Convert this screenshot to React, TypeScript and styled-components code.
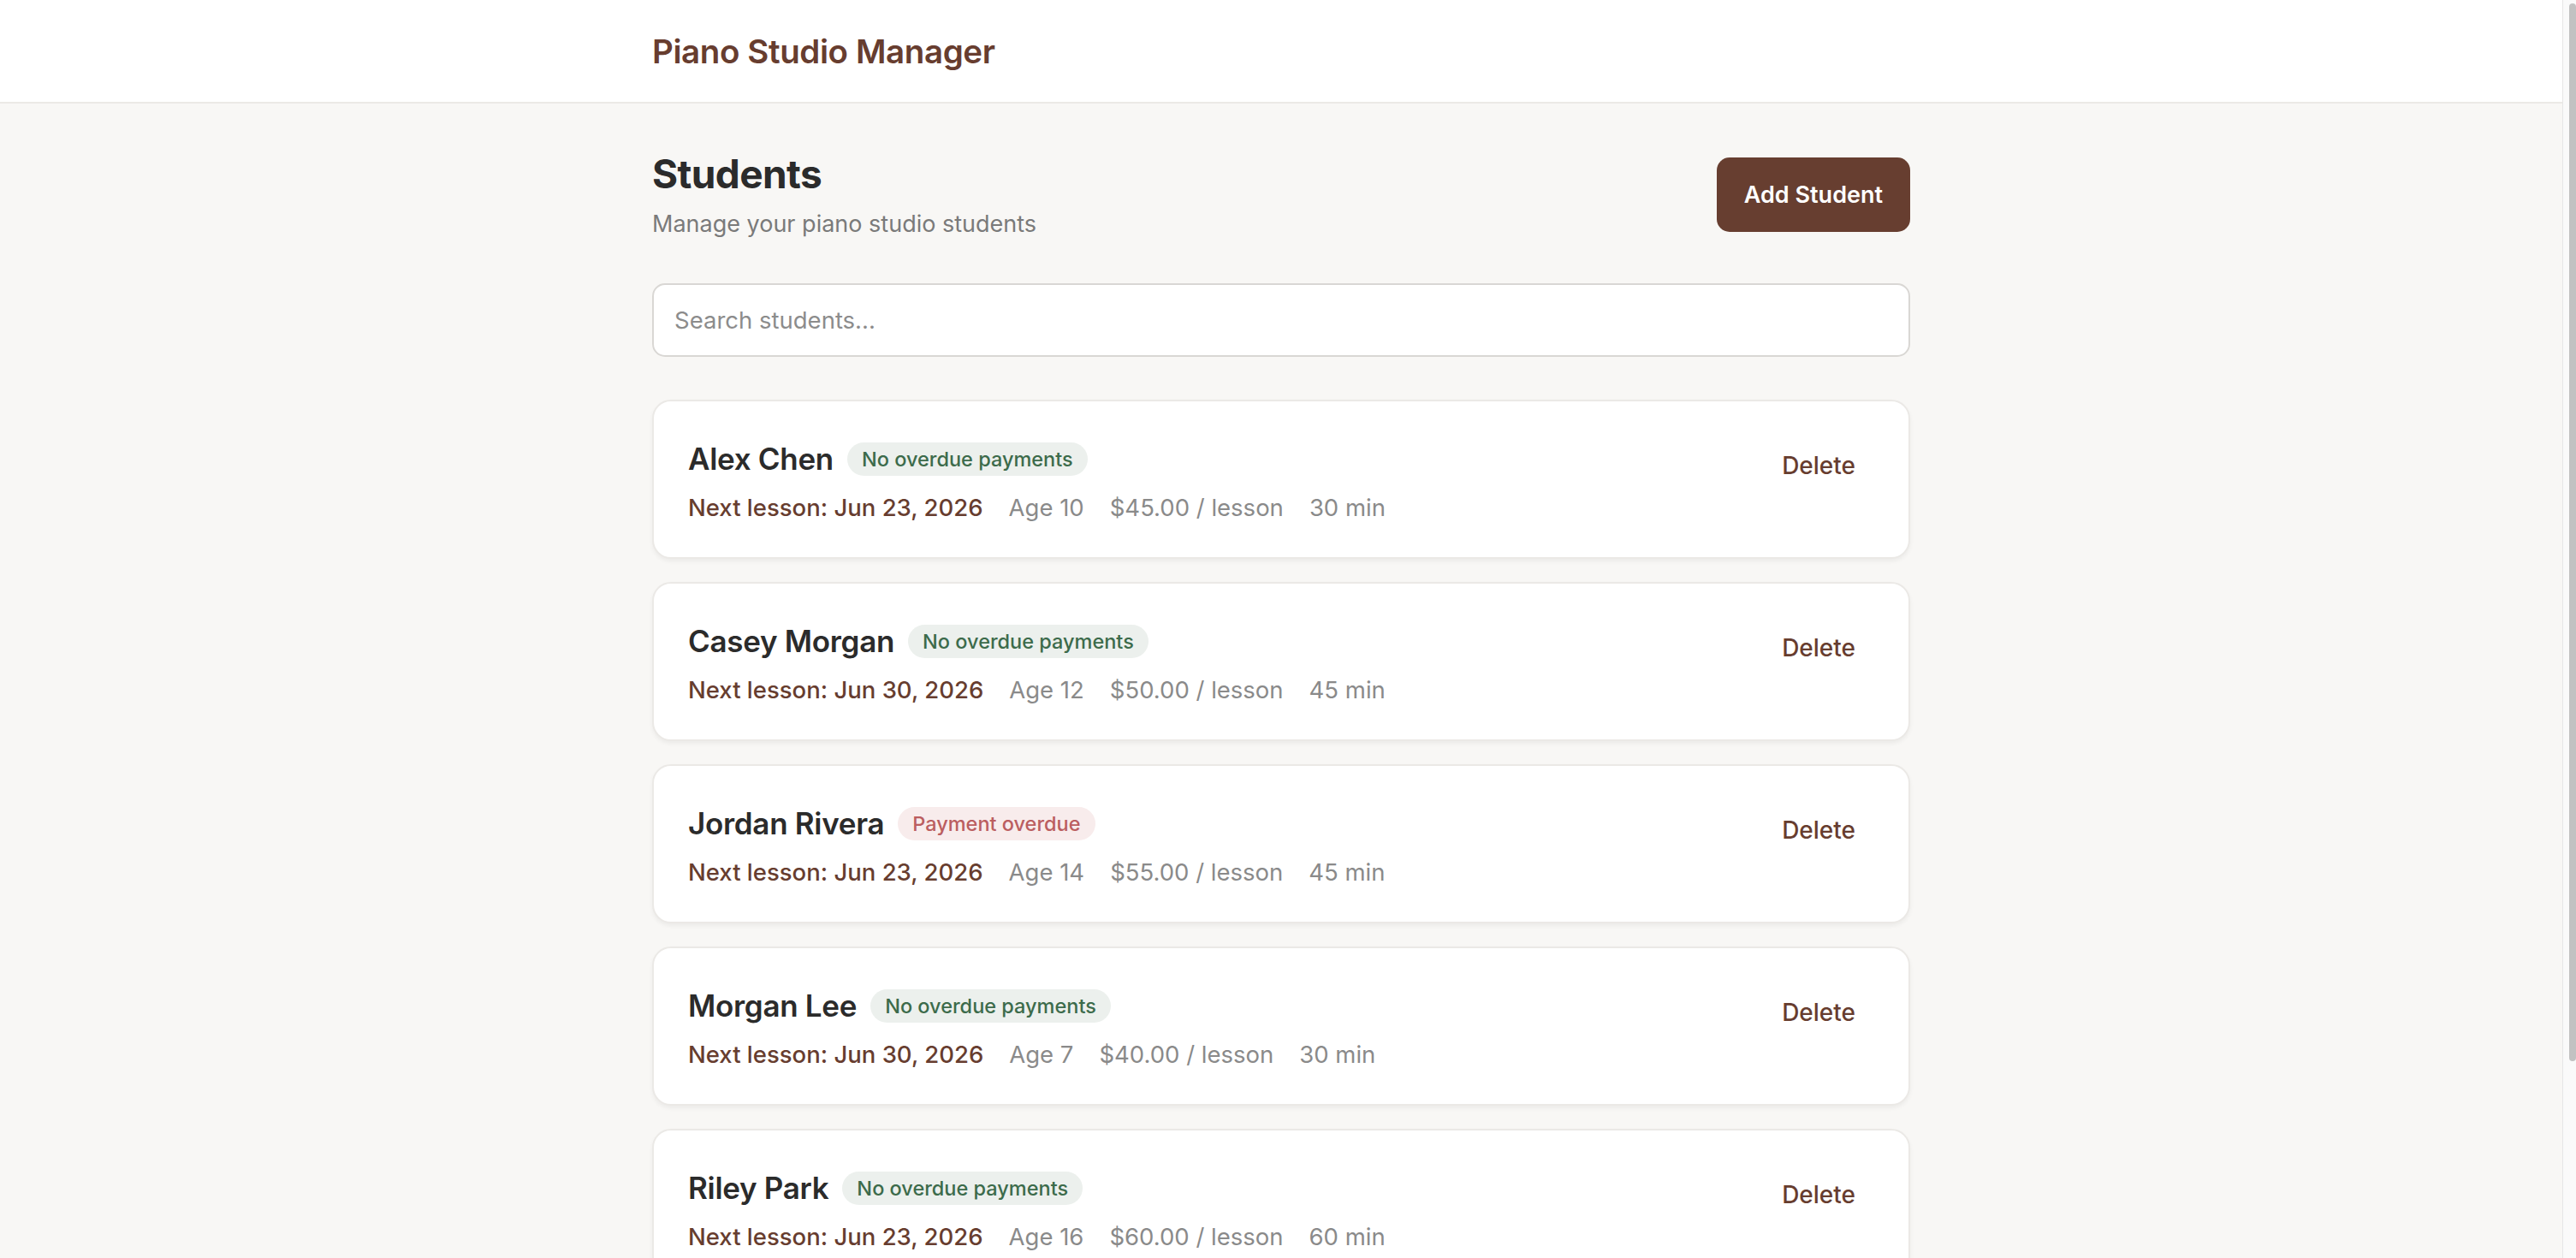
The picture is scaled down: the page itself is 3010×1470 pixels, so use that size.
import React from "react";
import styled, { createGlobalStyle } from "styled-components";

const GlobalStyle = createGlobalStyle`
  html, body {
    margin: 0;
    padding: 0;
    background: #f8f7f5;
    font-family: Inter, "Noto Sans", "Liberation Sans", sans-serif;
    overflow: hidden;
  }
  * { box-sizing: border-box; }
`;

const Shell = styled.div`
  display: flex;
  height: 100vh;
`;

const ScrollArea = styled.div`
  flex: 1;
  min-width: 0;
  height: 100vh;
  overflow-y: auto;
  scrollbar-width: none;
  background: #f8f7f5;
  &::-webkit-scrollbar {
    display: none;
  }
`;

const ScrollRail = styled.div`
  flex: 0 0 16px;
  height: 100vh;
  background: #fafafa;
  border-left: 1px solid #e6e6e6;
  padding: 4px 0 0 7px;
`;

const ScrollThumb = styled.div`
  width: 8px;
  height: 1236px;
  background: #c2c2c2;
  border-radius: 4px;
`;

const TopBar = styled.header`
  background: #ffffff;
  border-bottom: 2px solid #ebe9e6;
`;

const TopBarInner = styled.div`
  max-width: 1470px;
  margin: 0 auto;
  height: 119px;
  display: flex;
  align-items: center;
`;

const Brand = styled.h1`
  margin: 0;
  font-size: 38.5px;
  font-weight: 600;
  letter-spacing: -0.4px;
  color: #673d2f;
`;

const Main = styled.main`
  max-width: 1470px;
  margin: 0 auto;
  padding: 55px 0 56px;
`;

const PageHeader = styled.div`
  display: flex;
  justify-content: space-between;
  align-items: center;
`;

const Heading = styled.h2`
  margin: 0;
  font-size: 46px;
  line-height: 55px;
  font-weight: 700;
  letter-spacing: -0.6px;
  color: #2b2b2b;
`;

const Subtitle = styled.p`
  margin: 14px 0 0;
  font-size: 27px;
  line-height: 34px;
  color: #7a7a7a;
`;

const AddButton = styled.button`
  height: 87px;
  padding: 0 32px;
  border: none;
  border-radius: 15px;
  background: #673e30;
  color: #ffffff;
  font-family: inherit;
  font-size: 27px;
  font-weight: 600;
  cursor: pointer;
`;

const SearchInput = styled.input`
  display: block;
  width: 100%;
  height: 86px;
  margin-top: 52px;
  padding: 0 24px;
  border: 2px solid #d9d7d4;
  border-radius: 15px;
  background: #ffffff;
  font-family: inherit;
  font-size: 27.5px;
  color: #2b2b2b;
  outline: none;
  &::placeholder {
    color: #8c8c8c;
  }
`;

const List = styled.div`
  margin-top: 50px;
  display: flex;
  flex-direction: column;
  gap: 27px;
`;

const Card = styled.div`
  background: #ffffff;
  border: 2px solid #ebe9e6;
  border-radius: 22px;
  box-shadow: 0 3px 5px rgba(0, 0, 0, 0.05);
  padding: 40px 40px 37px;
  display: flex;
  justify-content: space-between;
  align-items: flex-start;
`;

const Info = styled.div`
  display: flex;
  flex-direction: column;
`;

const NameRow = styled.div`
  display: flex;
  align-items: center;
  gap: 16px;
  height: 54px;
`;

const Name = styled.span`
  font-size: 35px;
  font-weight: 600;
  letter-spacing: -0.3px;
  color: #2b2b2b;
`;

const Badge = styled.span<{ $overdue?: boolean }>`
  display: inline-flex;
  align-items: center;
  height: 39px;
  padding: 0 17px;
  border-radius: 20px;
  font-size: 23.5px;
  font-weight: 500;
  background: ${(p) => (p.$overdue ? "#f8ecec" : "#ecf0ed")};
  color: ${(p) => (p.$overdue ? "#bb5e60" : "#3c6b4b")};
`;

const MetaRow = styled.div`
  display: flex;
  align-items: center;
  gap: 30px;
  margin-top: 9px;
  font-size: 27.5px;
  line-height: 42px;
`;

const Meta = styled.span<{ $accent?: boolean }>`
  color: ${(p) => (p.$accent ? "#673d2f" : "#8a8a8a")};
  font-weight: ${(p) => (p.$accent ? 500 : 400)};
`;

const DeleteButton = styled.button`
  border: none;
  background: none;
  padding: 18px 22px 18px 25px;
  font-family: inherit;
  font-size: 28px;
  line-height: 34px;
  font-weight: 500;
  color: #673d2f;
  cursor: pointer;
`;

type Student = {
  name: string;
  overdue: boolean;
  next: string;
  age: number;
  rate: string;
  length: number;
};

const students: Student[] = [
  { name: "Alex Chen", overdue: false, next: "Jun 23, 2026", age: 10, rate: "$45.00", length: 30 },
  { name: "Casey Morgan", overdue: false, next: "Jun 30, 2026", age: 12, rate: "$50.00", length: 45 },
  { name: "Jordan Rivera", overdue: true, next: "Jun 23, 2026", age: 14, rate: "$55.00", length: 45 },
  { name: "Morgan Lee", overdue: false, next: "Jun 30, 2026", age: 7, rate: "$40.00", length: 30 },
  { name: "Riley Park", overdue: false, next: "Jun 23, 2026", age: 16, rate: "$60.00", length: 60 },
  { name: "Sam Taylor", overdue: false, next: "Jun 30, 2026", age: 9, rate: "$45.00", length: 30 },
];

export default function App() {
  return (
    <>
      <GlobalStyle />
      <Shell>
        <ScrollArea>
          <TopBar>
            <TopBarInner>
              <Brand>Piano Studio Manager</Brand>
            </TopBarInner>
          </TopBar>
          <Main>
            <PageHeader>
              <div>
                <Heading>Students</Heading>
                <Subtitle>Manage your piano studio students</Subtitle>
              </div>
              <AddButton>Add Student</AddButton>
            </PageHeader>
            <SearchInput placeholder="Search students..." />
            <List>
              {students.map((s) => (
                <Card key={s.name}>
                  <Info>
                    <NameRow>
                      <Name>{s.name}</Name>
                      <Badge $overdue={s.overdue}>
                        {s.overdue ? "Payment overdue" : "No overdue payments"}
                      </Badge>
                    </NameRow>
                    <MetaRow>
                      <Meta $accent>Next lesson: {s.next}</Meta>
                      <Meta>Age {s.age}</Meta>
                      <Meta>{s.rate} / lesson</Meta>
                      <Meta>{s.length} min</Meta>
                    </MetaRow>
                  </Info>
                  <DeleteButton>Delete</DeleteButton>
                </Card>
              ))}
            </List>
          </Main>
        </ScrollArea>
        <ScrollRail>
          <ScrollThumb />
        </ScrollRail>
      </Shell>
    </>
  );
}
